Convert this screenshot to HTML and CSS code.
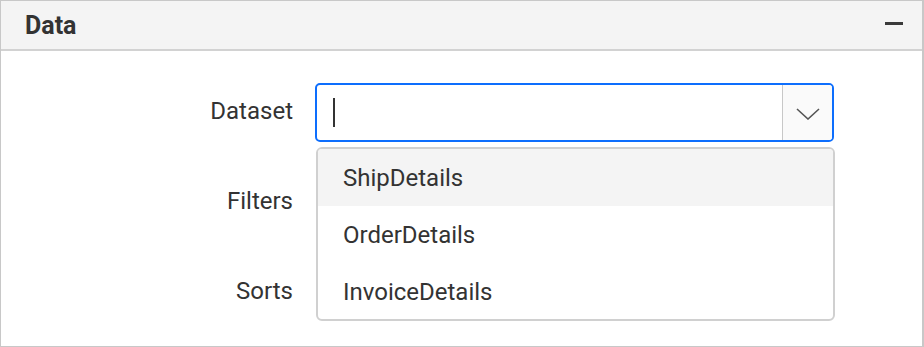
FILE: index.html
```html
<!DOCTYPE html>
<html lang="en">
<head>
<meta charset="utf-8">
<title>Data</title>
<link rel="stylesheet" href="styles.css">
</head>
<body>
<div class="panel">
  <div class="panel-header">
    <span class="panel-title">Data</span>
    <span class="collapse-icon"></span>
  </div>
  <div class="panel-body">
    <div class="row">
      <label class="row-label">Dataset</label>
      <div class="field">
        <div class="combo">
          <div class="combo-input"><span class="caret"></span></div>
          <div class="combo-button">
            <svg width="24" height="12" viewBox="0 0 24 12"><path d="M1 1 L12 11 L23 1" fill="none" stroke="#555" stroke-width="1.6"/></svg>
          </div>
        </div>
        <ul class="popup">
          <li class="popup-item hover">ShipDetails</li>
          <li class="popup-item">OrderDetails</li>
          <li class="popup-item">InvoiceDetails</li>
        </ul>
      </div>
    </div>
    <div class="row">
      <label class="row-label">Filters</label>
      <div class="field"></div>
    </div>
    <div class="row">
      <label class="row-label">Sorts</label>
      <div class="field"></div>
    </div>
  </div>
</div>
</body>
</html>
```
FILE: styles.css
```css
* { box-sizing: border-box; }
html, body { margin: 0; padding: 0; background: #fff; }
body { font-family: Roboto, "Noto Sans", sans-serif; color: #333; }

.panel {
  width: 924px;
  height: 347px;
  border: 1px solid #c8c8c8;
  border-right-width: 2px;
  background: #fff;
}

.panel-header {
  height: 50px;
  background: #f4f4f4;
  border-bottom: 2px solid #d2d2d2;
  display: flex;
  align-items: center;
  justify-content: space-between;
  padding: 0 19px 0 24px;
}
.panel-title {
  font-size: 25px;
  font-weight: 700;
  color: #333;
  line-height: 1;
}
.collapse-icon {
  width: 18px;
  height: 3px;
  background: #3a3a3a;
  margin-top: -3px;
}

.panel-body {
  padding-top: 32px;
  display: flex;
  flex-direction: column;
  gap: 31px;
}

.row {
  display: grid;
  grid-template-columns: 292px 519px;
  column-gap: 22px;
  height: 59px;
  align-items: center;
}
.row-label {
  text-align: right;
  font-size: 24px;
  color: #333;
  margin-top: -3px;
}

.field { position: relative; height: 59px; }

.combo {
  display: flex;
  height: 59px;
  border: 2px solid #0d6efd;
  border-radius: 5px;
  overflow: hidden;
  background: #fff;
}
.combo-input {
  flex: 1;
  display: flex;
  align-items: center;
  padding-left: 16px;
}
.caret {
  width: 2px;
  height: 29px;
  background: #333;
}
.combo-button {
  width: 50px;
  border-left: 1px solid #c8c8c8;
  background: #fafafa;
  display: flex;
  align-items: center;
  justify-content: center;
  padding-top: 2px;
}

.popup {
  position: absolute;
  top: 64px;
  left: 1px;
  width: 519px;
  height: 174px;
  margin: 0;
  padding: 0;
  list-style: none;
  background: #fff;
  border: 2px solid #d0d0d0;
  border-radius: 6px;
  overflow: hidden;
  z-index: 2;
}
.popup-item {
  height: 57px;
  display: flex;
  align-items: center;
  padding-left: 25px;
  font-size: 24px;
  color: #333;
}
.popup-item.hover { background: #f4f4f4; }
```
